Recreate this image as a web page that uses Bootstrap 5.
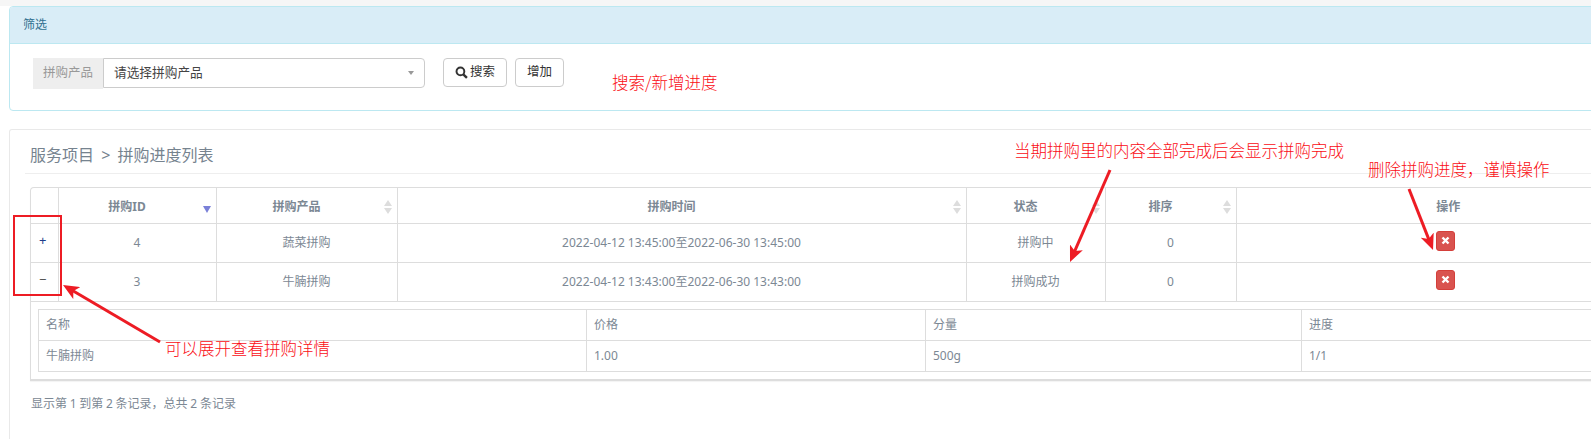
<!DOCTYPE html>
<html lang="zh">
<head>
<meta charset="utf-8">
<title>拼购进度列表</title>
<link href="https://cdn.jsdelivr.net/npm/bootstrap@5.3.0/dist/css/bootstrap.min.css" rel="stylesheet">
<style>
html,body{height:439px;overflow:hidden;background:#fff}
body{font-family:"Noto Sans","Noto Sans CJK SC",sans-serif;font-size:12px;color:#76838f}
.shell{position:relative;width:1680px;height:439px;padding:6px 0 0 9px;background:linear-gradient(#f6f6f6 6px,#fff 6px)}
.filter-panel{border-color:#bce8f1;border-radius:4px;height:105px;--bs-card-inner-border-radius:3px}
.filter-panel .card-header{background:#d9edf7;border-color:#bce8f1;color:#31708f;height:37px;padding:10px 13px;font-size:12px;line-height:16px}
.filter-body{padding:14px 0 0 23px;gap:18px}
.addon{width:70px;height:31px;background:#eee;color:#999;font-size:12.5px;border:0;border-radius:0;padding:0 0 0 10px;display:flex;align-items:center}
.pick{width:322px;height:30px;border:1px solid #ccc;border-radius:0 4px 4px 0;color:#444;font-size:12.7px;padding:0 10px 0 10px}
.caret-down{width:0;height:0;border:3.5px solid transparent;border-top:4px solid #999;border-bottom:0}
.plain-btn{height:29px;padding:0 11px;border:1px solid #ccc;border-radius:4px;background:#fff;color:#333;font-size:12.5px;line-height:1;display:inline-flex;align-items:center;gap:2px}
.plain-btn svg{display:block}
.list-panel{margin-top:18px;height:320px;border:1px solid #e9e9e9;border-bottom:0;border-radius:3px 3px 0 0;padding:15px}
.crumb{font-size:16px;line-height:20px;margin:0;padding:0 0 9px 5px;border-bottom:1px solid #eee;color:#76838f;font-weight:400;height:29px;word-spacing:3px}
.table-frame{margin:13px 0 0 5px;width:1631px;border:1px solid #ddd;border-bottom:2px solid #ddd;border-radius:4px 4px 0 0;box-shadow:0 1px 1px rgba(0,0,0,.05)}
.grid-table{table-layout:fixed;width:100%;margin:0;font-size:12px;color:#76838f;--bs-table-color:#76838f}
.grid-table>:not(caption)>*>*{border-color:#ddd;padding:0;color:#7c8894;text-align:center;vertical-align:middle;border-width:0 0 1px 1px;box-shadow:none}
.grid-table>:not(caption)>*>*:first-child{border-left:0}
.grid-table th{height:35px;font-weight:700;position:relative;padding-top:3px}
.grid-table th.sorty{padding-right:20px}
.grid-table td{height:39px}
.grid-table td.toggle{text-align:left;padding:0 0 4px 8px}
.toggle a{color:#1f3d8a;text-decoration:none;font-size:13px}
.toggle a.open{color:#555}
.sort-mark{position:absolute;right:5px;top:12px;display:block}
.del-btn{width:19px;height:20px;padding:0;border:1px solid #d43f3a;background:#d9534f;border-radius:3px;display:inline-flex;align-items:center;justify-content:center;vertical-align:middle;margin:0 5px 4px 0}
.grid-table tr.detail-row>td{height:78px;padding:7px 0 0 7px;text-align:left;border-bottom:0;vertical-align:top}
.sub-table{table-layout:fixed;width:1614px;margin:0;font-size:12px}
.sub-table>:not(caption)>*>*{border:1px solid #ddd;height:31px;padding:0 7px;text-align:left;color:#7c8894;vertical-align:middle}
.records{margin:15px 0 0 6px;line-height:16px;color:#7c8894;word-spacing:-.4px}
.note{position:absolute;color:#fa0d14;font-size:16.5px;line-height:20px;white-space:nowrap;font-family:"Noto Sans CJK SC",sans-serif;font-weight:300}
.n1{left:612px;top:72px}
.n2{left:1014px;top:140px}
.n3{left:1368px;top:159px}
.n4{left:165px;top:338px}
.marks{position:absolute;left:0;top:0;width:1680px;height:439px;pointer-events:none}
</style>
</head>
<body>
<div class="shell">
  <section class="card filter-panel">
    <div class="card-header">筛选</div>
    <div class="filter-body d-flex align-items-start">
      <div class="d-flex align-items-start">
        <span class="addon">拼购产品</span>
        <span class="pick d-flex align-items-center justify-content-between"><span>请选择拼购产品</span><span class="caret-down"></span></span>
      </div>
      <div class="d-flex gap-2">
        <button type="button" class="plain-btn"><svg width="13" height="13" viewBox="0 0 12 12"><circle cx="5" cy="5" r="3.6" fill="none" stroke="#333" stroke-width="1.8"/><path d="M7.7 7.7 11 11" stroke="#333" stroke-width="2.2"/></svg>搜索</button>
        <button type="button" class="plain-btn">增加</button>
      </div>
    </div>
  </section>

  <section class="list-panel">
    <h2 class="crumb">服务项目 &gt; 拼购进度列表</h2>
    <div class="table-frame">
      <table class="table grid-table">
        <colgroup><col style="width:27px"><col style="width:158px"><col style="width:181px"><col style="width:569px"><col style="width:139px"><col style="width:131px"><col></colgroup>
        <thead>
          <tr>
            <th></th>
            <th class="sorty">拼购ID<svg class="sort-mark" width="8" height="14" viewBox="0 0 8 14"><path d="M0 6h8l-4 7z" fill="#7a80d8"/></svg></th>
            <th class="sorty">拼购产品<svg class="sort-mark" width="8" height="14" viewBox="0 0 8 14"><path d="M4 0l4 6H0zM0 8h8l-4 6z" fill="#ddd"/></svg></th>
            <th class="sorty">拼购时间<svg class="sort-mark" width="8" height="14" viewBox="0 0 8 14"><path d="M4 0l4 6H0zM0 8h8l-4 6z" fill="#ddd"/></svg></th>
            <th class="sorty">状态<svg class="sort-mark" width="8" height="14" viewBox="0 0 8 14"><path d="M4 0l4 6H0zM0 8h8l-4 6z" fill="#ddd"/></svg></th>
            <th class="sorty">排序<svg class="sort-mark" width="8" height="14" viewBox="0 0 8 14"><path d="M4 0l4 6H0zM0 8h8l-4 6z" fill="#ddd"/></svg></th>
            <th>操作</th>
          </tr>
        </thead>
        <tbody>
          <tr>
            <td class="toggle"><a href="#">+</a></td><td>4</td><td>蔬菜拼购</td><td>2022-04-12 13:45:00至2022-06-30 13:45:00</td><td>拼购中</td><td>0</td>
            <td><button type="button" class="del-btn" aria-label="删除"><svg width="9" height="9" viewBox="0 0 9 9"><path d="M1.5 1.5l6 6M7.5 1.5l-6 6" stroke="#fff" stroke-width="2.4"/></svg></button></td>
          </tr>
          <tr>
            <td class="toggle"><a class="open" href="#">−</a></td><td>3</td><td>牛腩拼购</td><td>2022-04-12 13:43:00至2022-06-30 13:43:00</td><td>拼购成功</td><td>0</td>
            <td><button type="button" class="del-btn" aria-label="删除"><svg width="9" height="9" viewBox="0 0 9 9"><path d="M1.5 1.5l6 6M7.5 1.5l-6 6" stroke="#fff" stroke-width="2.4"/></svg></button></td>
          </tr>
          <tr class="detail-row">
            <td colspan="7">
              <table class="table sub-table">
                <colgroup><col style="width:548px"><col style="width:339px"><col style="width:376px"><col></colgroup>
                <tbody>
                  <tr><td>名称</td><td>价格</td><td>分量</td><td>进度</td></tr>
                  <tr><td>牛腩拼购</td><td>1.00</td><td>500g</td><td>1/1</td></tr>
                </tbody>
              </table>
            </td>
          </tr>
        </tbody>
      </table>
    </div>
    <div class="records">显示第 1 到第 2 条记录，总共 2 条记录</div>
  </section>

  <span class="note n1">搜索/新增进度</span>
  <span class="note n2">当期拼购里的内容全部完成后会显示拼购完成</span>
  <span class="note n3">删除拼购进度，谨慎操作</span>
  <span class="note n4">可以展开查看拼购详情</span>
  <svg class="marks" viewBox="0 0 1680 439">
    <defs><marker id="head" markerUnits="userSpaceOnUse" markerWidth="18" markerHeight="14" viewBox="0 0 18 14" refX="8" refY="7" orient="auto"><path d="M0 0 16 7 0 14 4 7z" fill="#ed1c24"/></marker></defs>
    <rect x="14" y="216" width="47" height="79" fill="none" stroke="#ed1c24" stroke-width="2"/>
    <g stroke="#ed1c24" stroke-width="3" fill="none">
      <line x1="1110" y1="170" x2="1073.2" y2="254.7" marker-end="url(#head)"/>
      <line x1="1409" y1="189" x2="1430.1" y2="242.6" marker-end="url(#head)"/>
      <line x1="160" y1="342" x2="69.9" y2="289" marker-end="url(#head)"/>
    </g>
  </svg>
</div>
<script src="https://cdn.jsdelivr.net/npm/bootstrap@5.3.0/dist/js/bootstrap.bundle.min.js"></script>
</body>
</html>
